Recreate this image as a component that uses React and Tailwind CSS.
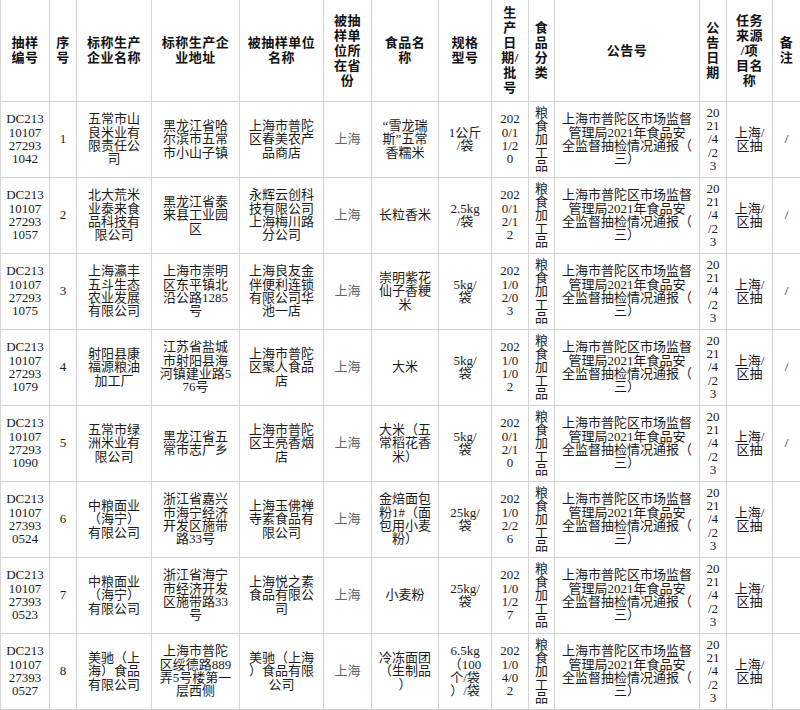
import React from "react";

const widths = [49, 27, 75, 88, 84, 48, 67, 53, 37, 26, 145, 27, 46, 28];

const headers = [
  ["抽样", "编号"],
  ["序", "号"],
  ["标称生产", "企业名称"],
  ["标称生产企", "业地址"],
  ["被抽样单位", "名称"],
  ["被抽", "样单", "位所", "在省", "份"],
  ["食品名", "称"],
  ["规格", "型号"],
  ["生", "产", "日", "期/", "批", "号"],
  ["食", "品", "分", "类"],
  ["公告号"],
  ["公", "告", "日", "期"],
  ["任务", "来源", "/项", "目名", "称"],
  ["备", "注"],
];

const notice = ["上海市普陀区市场监督", "管理局2021年食品安", "全监督抽检情况通报（", "三）"];
const category = ["粮", "食", "加", "工", "品"];
const noticeDate = ["20", "21", "/4", "/2", "3"];
const source = ["上海/", "区抽"];

const rows = [
  {
    code: ["DC213", "10107", "27293", "1042"],
    no: "1",
    maker: ["五常市山", "良米业有", "限责任公", "司"],
    addr: ["黑龙江省哈", "尔滨市五常", "市小山子镇"],
    unit: ["上海市普陀", "区春美农产", "品商店"],
    food: ["“雪龙瑞", "斯”五常", "香糯米"],
    spec: ["1公斤", "/袋"],
    date: ["202", "0/1", "1/2", "0"],
    note: "/",
  },
  {
    code: ["DC213", "10107", "27293", "1057"],
    no: "2",
    maker: ["北大荒米", "业泰来食", "品科技有", "限公司"],
    addr: ["黑龙江省泰", "来县工业园", "区"],
    unit: ["永辉云创科", "技有限公司", "上海梅川路", "分公司"],
    food: ["长粒香米"],
    spec: ["2.5kg", "/袋"],
    date: ["202", "0/1", "2/1", "2"],
    note: "/",
  },
  {
    code: ["DC213", "10107", "27293", "1075"],
    no: "3",
    maker: ["上海瀛丰", "五斗生态", "农业发展", "有限公司"],
    addr: ["上海市崇明", "区东平镇北", "沿公路1285", "号"],
    unit: ["上海良友金", "伴便利连锁", "有限公司华", "池一店"],
    food: ["崇明紫花", "仙子香粳", "米"],
    spec: ["5kg/", "袋"],
    date: ["202", "1/0", "2/0", "3"],
    note: "/",
  },
  {
    code: ["DC213", "10107", "27293", "1079"],
    no: "4",
    maker: ["射阳县康", "福源粮油", "加工厂"],
    addr: ["江苏省盐城", "市射阳县海", "河镇建业路5", "76号"],
    unit: ["上海市普陀", "区聚人食品", "店"],
    food: ["大米"],
    spec: ["5kg/", "袋"],
    date: ["202", "1/0", "1/0", "2"],
    note: "/",
  },
  {
    code: ["DC213", "10107", "27293", "1090"],
    no: "5",
    maker: ["五常市绿", "洲米业有", "限公司"],
    addr: ["黑龙江省五", "常市志广乡"],
    unit: ["上海市普陀", "区王亮香烟", "店"],
    food: ["大米（五", "常稻花香", "米）"],
    spec: ["5kg/", "袋"],
    date: ["202", "0/1", "2/1", "0"],
    note: "/",
  },
  {
    code: ["DC213", "10107", "27393", "0524"],
    no: "6",
    maker: ["中粮面业", "（海宁）", "有限公司"],
    addr: ["浙江省嘉兴", "市海宁经济", "开发区施带", "路33号"],
    unit: ["上海玉佛禅", "寺素食品有", "限公司"],
    food: ["金焙面包", "粉1#（面", "包用小麦", "粉）"],
    spec: ["25kg/", "袋"],
    date: ["202", "1/0", "2/2", "6"],
    note: "",
  },
  {
    code: ["DC213", "10107", "27393", "0523"],
    no: "7",
    maker: ["中粮面业", "（海宁）", "有限公司"],
    addr: ["浙江省海宁", "市经济开发", "区施带路33", "号"],
    unit: ["上海悦之素", "食品有限公", "司"],
    food: ["小麦粉"],
    spec: ["25kg/", "袋"],
    date: ["202", "1/0", "1/2", "7"],
    note: "",
  },
  {
    code: ["DC213", "10107", "27393", "0527"],
    no: "8",
    maker: ["美驰（上", "海）食品", "有限公司"],
    addr: ["上海市普陀", "区绥德路889", "弄5号楼第一", "层西侧"],
    unit: ["美驰（上海", "）食品有限", "公司"],
    food: ["冷冻面团", "（生制品", "）"],
    spec: ["6.5kg", "（100", "个/袋", "）/袋"],
    date: ["202", "1/0", "4/0", "2"],
    note: "",
  },
];

function Lines({ lines }) {
  return lines.map((l, i) => (
    <div key={i} className="whitespace-nowrap">
      {l}
    </div>
  ));
}

export default function App() {
  return (
    <div className="w-[800px] h-[710px] bg-white overflow-hidden" style={{ fontFamily: '"Liberation Serif", "Noto Sans CJK SC", serif' }}>
      <table className="table-fixed border-collapse w-[800px] text-[13px] text-[#1a1a1a]">
        <colgroup>
          {widths.map((w, i) => (
            <col key={i} style={{ width: w }} />
          ))}
        </colgroup>
        <thead>
          <tr className="h-[101px]">
            {headers.map((h, i) => (
              <th key={i} className="border border-[#d4d4d4] border-t-0 p-0 font-bold text-center align-middle leading-[15px] tracking-[0.5px] text-[#111]">
                <Lines lines={h} />
              </th>
            ))}
          </tr>
        </thead>
        <tbody>
          {rows.map((r) => (
            <tr key={r.no} className="h-[76px]">
              {[
                r.code,
                [r.no],
                r.maker,
                r.addr,
                r.unit,
                ["上海"],
                r.food,
                r.spec,
                r.date,
                category,
                notice,
                noticeDate,
                source,
                [r.note],
              ].map((c, i) => (
                <td
                  key={i}
                  className={
                    "border border-[#d4d4d4] p-0 text-center align-middle leading-[13.3px] font-normal " +
                    (i === 5 ? "text-[#666]" : "")
                  }
                >
                  <Lines lines={c} />
                </td>
              ))}
            </tr>
          ))}
        </tbody>
      </table>
    </div>
  );
}
